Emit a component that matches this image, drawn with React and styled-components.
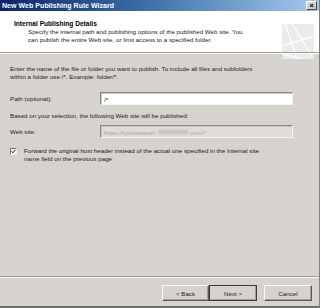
import React from "react";
import styled, { createGlobalStyle, css } from "styled-components";

const Global = createGlobalStyle`
  html, body { margin: 0; padding: 0; background: #d6d3ce; }
  body { width: 320px; height: 308px; overflow: hidden; }
  #root { width: 320px; height: 308px; }
`;

const Window = styled.div`
  width: 320px;
  height: 308px;
  box-sizing: border-box;
  display: flex;
  flex-direction: column;
  background: #d6d3ce;
  border-right: 1px solid #808080;
  border-bottom: 2px solid #6f6d69;
  font-family: "Liberation Sans", Arial, sans-serif;
  font-size: 6.2px;
  color: #1a1a1a;
`;

const TitleBar = styled.div`
  height: 11px;
  flex: none;
  display: flex;
  align-items: center;
  justify-content: space-between;
  padding: 0 2px 0 2px;
  background: linear-gradient(to right, #0a246a 0%, #3a6ea5 45%, #a6caf0 100%);
`;

const TitleText = styled.span`
  color: #fff;
  font-weight: bold;
  font-size: 7px;
  letter-spacing: 0.05px;
`;

const CloseButton = styled.div`
  width: 11px;
  height: 9px;
  box-sizing: border-box;
  background: #d6d3ce;
  border: 1px solid;
  border-color: #fff #404040 #404040 #fff;
  display: flex;
  align-items: center;
  justify-content: center;
  font-size: 8px;
  font-weight: bold;
  line-height: 1;
  color: #000;
`;

const Header = styled.div`
  height: 41px;
  flex: none;
  box-sizing: border-box;
  background: #fff;
  display: flex;
  justify-content: space-between;
  padding: 2px 5px 0 14px;
`;

const HeaderText = styled.div`
  padding-top: 7px;
`;

const HeaderTitle = styled.div`
  font-weight: bold;
  font-size: 6.6px;
  line-height: 8px;
  color: #000;
`;

const HeaderDesc = styled.div`
  margin-left: 14px;
  line-height: 8px;
  white-space: nowrap;
`;

const Etched = styled.div`
  height: 2px;
  flex: none;
  border-top: 1px solid #a09e9a;
  border-bottom: 1px solid #fff;
  box-sizing: border-box;
`;

const Body = styled.div`
  flex: 1;
  padding: 11px 10px 0 10px;
  display: flex;
  flex-direction: column;
`;

const Paragraph = styled.div`
  line-height: 8px;
  margin-top: ${(p) => p.$mt || 0}px;
`;

const FieldRow = styled.div`
  display: flex;
  align-items: center;
  margin-top: ${(p) => p.$mt || 0}px;
`;

const Label = styled.div`
  width: 90px;
`;

const TextBox = styled.div`
  width: 193px;
  height: 13px;
  box-sizing: border-box;
  border: 1px solid;
  border-color: #8a8884 #f4f3f1 #f4f3f1 #8a8884;
  box-shadow: inset 1px 1px 0 #c8c6c2;
  padding: 1px 0 0 3px;
  display: flex;
  align-items: center;
  ${(p) =>
    p.$disabled
      ? css`
          background: #dedcd8;
          color: #a8a6a2;
        `
      : css`
          background: #fff;
          color: #222;
        `}
`;

const Blur = styled.span`
  display: inline-block;
  width: 30px;
  height: 4px;
  background: #c2c0bc;
  margin: 0 1px;
  filter: blur(1px);
`;

const CheckRow = styled.div`
  display: flex;
  align-items: flex-start;
  margin-top: 9px;
`;

const CheckBox = styled.div`
  width: 7px;
  height: 7px;
  flex: none;
  box-sizing: border-box;
  border: 1px solid;
  border-color: #7a7874 #f4f3f1 #f4f3f1 #7a7874;
  background: #fff;
  margin-top: 1px;
  display: flex;
  align-items: center;
  justify-content: center;
`;

const CheckText = styled.div`
  margin-left: 7px;
  line-height: 8px;
`;

const Footer = styled.div`
  height: 28px;
  flex: none;
  display: flex;
  justify-content: flex-end;
  align-items: flex-start;
  padding: 7px 7px 0 0;
  box-sizing: border-box;
`;

const Button = styled.div`
  width: ${(p) => p.$w || 48}px;
  height: 16px;
  box-sizing: border-box;
  display: flex;
  align-items: center;
  justify-content: center;
  background: #d6d3ce;
  margin-left: ${(p) => p.$ml || 0}px;
  border: 1px solid;
  border-color: #fbfaf9 #5a5855 #5a5855 #fbfaf9;
  box-shadow: inset -1px -1px 0 #a09e9a;
  color: #222;
  ${(p) =>
    p.$default &&
    css`
      outline: 1px solid #3a3a3a;
      outline-offset: -1px;
    `}
`;

const Logo = () => (
  <svg width="32" height="35" viewBox="0 0 32 35" style={{ marginTop: 11 }}>
    <rect x="0" y="0" width="32" height="35" fill="#ebebeb" />
    <path d="M3 0 L15 35" stroke="#fff" strokeWidth="1.2" fill="none" />
    <path d="M10 0 L30 32" stroke="#fff" strokeWidth="1.2" fill="none" />
    <path d="M0 22 L32 12" stroke="#fff" strokeWidth="1.2" fill="none" />
    <path d="M0 30 L20 35" stroke="#fff" strokeWidth="1" fill="none" />
  </svg>
);

export default function App() {
  return (
    <>
      <Global />
      <Window>
        <TitleBar>
          <TitleText>New Web Publishing Rule Wizard</TitleText>
          <CloseButton>×</CloseButton>
        </TitleBar>
        <Header>
          <HeaderText>
            <HeaderTitle>Internal Publishing Details</HeaderTitle>
            <HeaderDesc>
              Specify the internal path and publishing options of the published Web site. You
              <br />
              can publish the entire Web site, or limit access to a specified folder.
            </HeaderDesc>
          </HeaderText>
          <Logo />
        </Header>
        <Etched />
        <Body>
          <Paragraph>
            Enter the name of the file or folder you want to publish. To include all files and subfolders
            <br />
            within a folder use /*. Example: folder/*.
          </Paragraph>
          <FieldRow $mt={11}>
            <Label>Path (optional):</Label>
            <TextBox>/*</TextBox>
          </FieldRow>
          <Paragraph $mt={7}>Based on your selection, the following Web site will be published:</Paragraph>
          <FieldRow $mt={5}>
            <Label>Web site:</Label>
            <TextBox $disabled>
              https://lyncwebmel.<Blur />.com/*
            </TextBox>
          </FieldRow>
          <CheckRow>
            <CheckBox>
              <svg width="5" height="5" viewBox="0 0 5 5">
                <path d="M0.5 2.2 L1.9 3.8 L4.5 0.8" stroke="#111" strokeWidth="1" fill="none" />
              </svg>
            </CheckBox>
            <CheckText>
              Forward the original host header instead of the actual one specified in the Internal site
              <br />
              name field on the previous page
            </CheckText>
          </CheckRow>
        </Body>
        <Etched />
        <Footer>
          <Button $w={47}>&lt; Back</Button>
          <Button $default>Next &gt;</Button>
          <Button $ml={7}>Cancel</Button>
        </Footer>
      </Window>
    </>
  );
}
